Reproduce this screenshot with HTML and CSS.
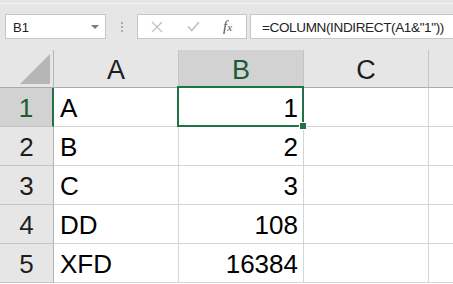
FILE: index.html
```html
<!DOCTYPE html>
<html>
<head>
<meta charset="utf-8">
<link rel="stylesheet" href="styles.css">
</head>
<body>
<div class="app">
  <div class="toolbar">
    <div class="topline"></div>
    <div class="bar">
      <div class="namebox"><span class="name">B1</span><span class="caret"></span></div>
      <div class="sep"><span class="dot"></span><span class="dot"></span><span class="dot"></span></div>
      <div class="fxbox">
        <svg class="ico" width="12" height="12" viewBox="0 0 12 12"><path d="M1 1L11 11M11 1L1 11" stroke="#c3c3c3" stroke-width="1.4" fill="none"/></svg>
        <svg class="ico" width="13" height="11" viewBox="0 0 13 11"><path d="M1 5.5L4.8 9.5L12 1" stroke="#c3c3c3" stroke-width="1.8" fill="none"/></svg>
        <span class="fx">f<span class="fxx">x</span></span>
      </div>
      <div class="formula"><span class="ftext">=COLUMN(INDIRECT(A1&amp;"1"))</span></div>
    </div>
  </div>
  <div class="sheet">
    <div class="grid">
      <div class="corner"><svg width="54" height="38" viewBox="0 0 54 38"><path d="M20 34L50 4L50 34Z" fill="#b6b6b6"/></svg></div>
      <div class="ch">A</div>
      <div class="ch sel">B</div>
      <div class="ch">C</div>
      <div class="ch end"></div>

      <div class="rh sel">1</div>
      <div class="c">A</div>
      <div class="c num">1</div>
      <div class="c"></div>
      <div class="c end"></div>

      <div class="rh">2</div>
      <div class="c">B</div>
      <div class="c num">2</div>
      <div class="c"></div>
      <div class="c end"></div>

      <div class="rh">3</div>
      <div class="c">C</div>
      <div class="c num">3</div>
      <div class="c"></div>
      <div class="c end"></div>

      <div class="rh">4</div>
      <div class="c">DD</div>
      <div class="c num">108</div>
      <div class="c"></div>
      <div class="c end"></div>

      <div class="rh">5</div>
      <div class="c">XFD</div>
      <div class="c num">16384</div>
      <div class="c"></div>
      <div class="c end"></div>
    </div>
    <div class="selection"></div>
    <div class="handle"></div>
  </div>
</div>
</body>
</html>
```

FILE: styles.css
```css
html, body {
  margin: 0;
  padding: 0;
}
body {
  width: 453px;
  height: 284px;
  overflow: hidden;
  background: #e6e6e6;
  font-family: "Liberation Sans", Arial, sans-serif;
}
.app {
  width: 453px;
  height: 284px;
  overflow: hidden;
}
.toolbar {
  height: 50px;
  background: #e6e6e6;
  box-sizing: border-box;
}
.topline {
  height: 3px;
  border-bottom: 1px solid #f4f4f4;
}
.bar {
  display: flex;
  align-items: stretch;
  height: 25px;
  margin-top: 10px;
  padding-left: 5px;
}
.namebox {
  flex: 0 0 101px;
  box-sizing: border-box;
  background: #fff;
  border: 1px solid #c6c6c6;
  display: flex;
  align-items: center;
  justify-content: space-between;
  padding: 0 6px 0 7px;
}
.name {
  font-size: 13px;
  color: #222;
  padding-top: 1px;
}
.caret {
  width: 0;
  height: 0;
  border-left: 4px solid transparent;
  border-right: 4px solid transparent;
  border-top: 4px solid #7a7a7a;
}
.sep {
  flex: 0 0 31px;
  display: flex;
  flex-direction: column;
  align-items: center;
  justify-content: center;
  gap: 2px;
}
.dot {
  width: 2px;
  height: 2px;
  background: #ababab;
}
.fxbox {
  flex: 0 0 110px;
  box-sizing: border-box;
  background: #fff;
  border: 1px solid #c6c6c6;
  display: flex;
  align-items: center;
  padding-left: 13px;
}
.ico {
  display: block;
}
.ico + .ico {
  margin-left: 24px;
}
.fx {
  margin-left: 23px;
  font-family: "Liberation Serif", "Times New Roman", serif;
  font-style: italic;
  font-size: 15px;
  color: #555;
}
.fxx {
  font-size: 11px;
}
.formula {
  flex: 1 1 auto;
  min-width: 0;
  overflow: hidden;
  margin-left: 3px;
  margin-right: -10px;
  box-sizing: border-box;
  background: #fff;
  border: 1px solid #c6c6c6;
  display: flex;
  align-items: center;
  padding-left: 11px;
  padding-top: 1px;
  font-size: 13.5px;
  letter-spacing: -0.35px;
  color: #222;
  white-space: nowrap;
}
.sheet {
  position: relative;
  background: #fff;
  height: 234px;
}
.grid {
  display: grid;
  grid-template-columns: 54px 125px 125px 125px 40px;
  grid-template-rows: 38px repeat(5, 39px);
}
.corner {
  background: #e6e6e6;
  border-right: 1px solid #b5b5b5;
  border-bottom: 1px solid #ababab;
  box-sizing: border-box;
}
.corner svg {
  display: block;
}
.ch {
  background: #e6e6e6;
  box-sizing: border-box;
  border-right: 1px solid #c4c4c4;
  border-bottom: 1px solid #ababab;
  font-size: 27px;
  text-align: center;
  line-height: 37px;
  padding-top: 2px;
  color: #1e1e1e;
}
.ch.sel {
  background: #d2d2d2;
  border-bottom: 2px solid #217346;
  color: #1d5a37;
}
.rh {
  background: #e6e6e6;
  box-sizing: border-box;
  border-right: 1px solid #b5b5b5;
  border-bottom: 1px solid #c4c4c4;
  font-size: 26px;
  text-align: center;
  line-height: 36px;
  padding-top: 2px;
  color: #1e1e1e;
}
.rh.sel {
  background: #d2d2d2;
  border-right: 2px solid #217346;
  color: #1d5a37;
}
.c {
  box-sizing: border-box;
  border-right: 1px solid #d4d4d4;
  border-bottom: 1px solid #d4d4d4;
  font-size: 26px;
  line-height: 36px;
  padding: 2px 5px 0 6px;
  color: #000;
  white-space: nowrap;
}
.c.num {
  text-align: right;
}
.selection {
  position: absolute;
  left: 177px;
  top: 36px;
  width: 127px;
  height: 41px;
  box-sizing: border-box;
  border: 2px solid #217346;
}
.handle {
  position: absolute;
  left: 300px;
  top: 73px;
  width: 6px;
  height: 6px;
  box-sizing: border-box;
  background: #217346;
  outline: 1px solid #fff;
}
```
